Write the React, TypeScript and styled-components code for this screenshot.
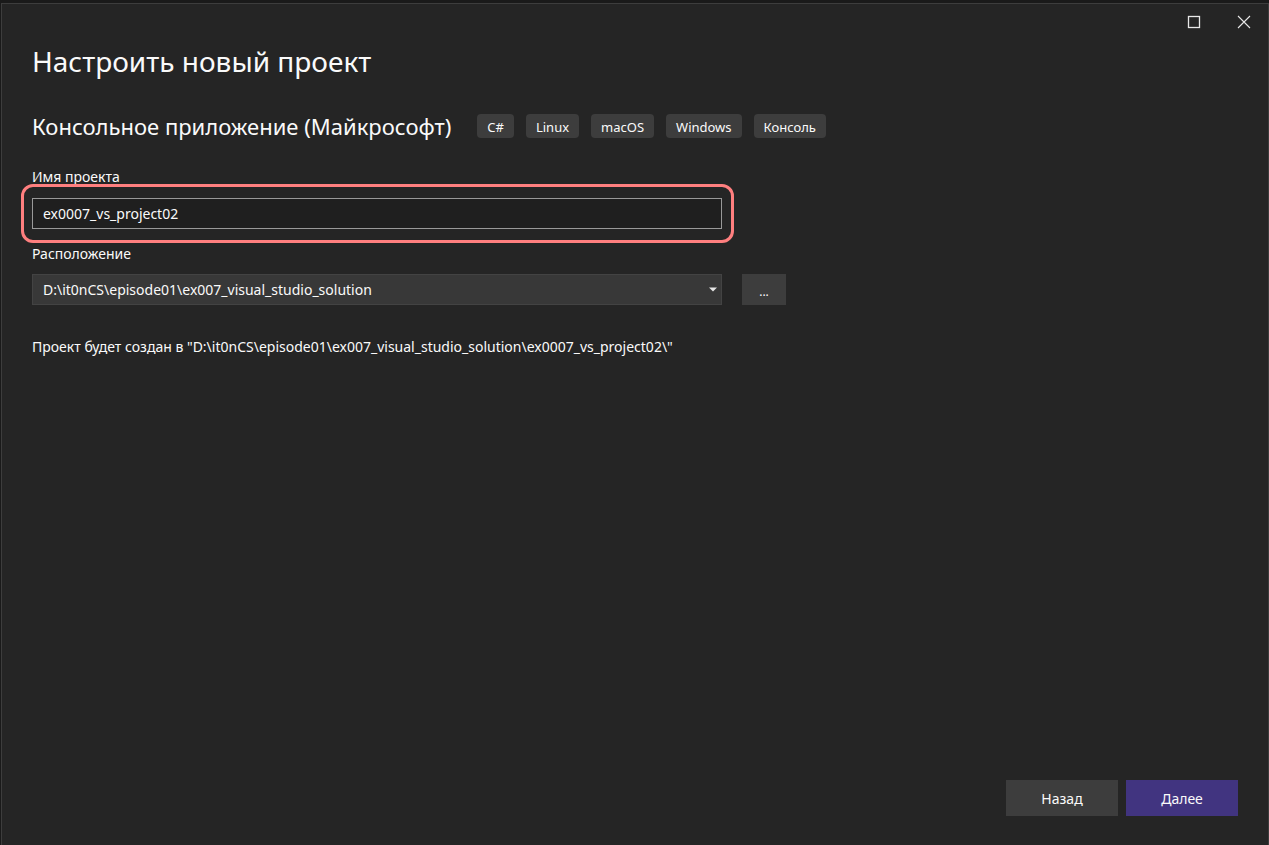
import React, { useState } from "react";
import styled, { createGlobalStyle } from "styled-components";

const GlobalStyle = createGlobalStyle`
  * { box-sizing: border-box; }
  body {
    margin: 0;
    background: #1a1a1a;
    color: #fafafa;
    font-family: "Noto Sans", "Open Sans", sans-serif;
    font-size: 14px;
    line-height: 20px;
  }
  button, input, select { font: inherit; color: inherit; margin: 0; border-radius: 0; }
`;

const Dialog = styled.main`
  display: flex;
  flex-direction: column;
  min-height: calc(100vh - 3px);
  margin: 3px 0 0 1px;
  background: #252525;
  border: 1px solid #3d3d3d;
  border-bottom: 0;
`;

const TitleBar = styled.header`
  display: flex;
  justify-content: flex-end;
  height: 36px;
`;

const CaptionButton = styled.button`
  display: flex;
  align-items: center;
  justify-content: center;
  width: 50px;
  height: 36px;
  padding: 0 0 0 2px;
  border: 0;
  background: transparent;
`;

const Content = styled.section`
  flex: 1;
  padding: 0 30px;
`;

const Title = styled.h1`
  margin: 0;
  font-size: 28px;
  line-height: 42px;
  font-weight: 400;
`;

const TemplateRow = styled.div`
  display: flex;
  flex-wrap: wrap;
  align-items: center;
  gap: 26px;
  margin-top: 26px;
`;

const TemplateName = styled.h2`
  margin: 0;
  font-size: 22px;
  line-height: 36px;
  font-weight: 400;
`;

const Tags = styled.ul`
  display: flex;
  gap: 12px;
  margin: 0;
  padding: 0;
  list-style: none;
`;

const Tag = styled.li`
  height: 24px;
  padding: 0 10px;
  border-radius: 4px;
  background: #3d3d3d;
  font-size: 13px;
  line-height: 26px;
`;

const Form = styled.form`
  margin-top: 23px;
`;

const Label = styled.label`
  display: block;
`;

const Field = styled.div<{ $gap: number }>`
  position: relative;
  width: 100%;
  max-width: 690px;
  margin-top: ${(p) => p.$gap}px;
`;

const Highlight = styled.span`
  position: absolute;
  inset: -14px -12px -14px -11px;
  border: 3px solid #ff7f7f;
  border-radius: 12px;
  pointer-events: none;
`;

const NameInput = styled.input`
  display: block;
  width: 100%;
  height: 31px;
  padding: 0 10px;
  border: 1px solid #999999;
  background: #1f1f1f;
  outline: 0;
`;

const LocationLabel = styled(Label)`
  margin-top: 15px;
`;

const LocationRow = styled.div`
  display: flex;
  align-items: flex-end;
  gap: 20px;
`;

const LocationSelect = styled.select`
  display: block;
  width: 100%;
  height: 31px;
  padding: 0 24px 0 10px;
  border: 1px solid #434343;
  background: #383838;
  appearance: none;
  outline: 0;
`;

const Arrow = styled.svg`
  position: absolute;
  top: 13px;
  right: 5px;
  pointer-events: none;
`;

const BrowseButton = styled.button`
  flex: none;
  width: 44px;
  height: 31px;
  padding: 4px 0 0;
  border: 0;
  background: #3d3d3d;
  font-size: 12px;
`;

const Summary = styled.p`
  margin: 32px 0 0;
`;

const Footer = styled.footer`
  display: flex;
  justify-content: flex-end;
  gap: 8px;
  padding: 0 30px 29px;
`;

const ActionButton = styled.button<{ $primary?: boolean }>`
  width: 112px;
  height: 36px;
  padding: 2px 0 0;
  border: 0;
  background: ${(p) => (p.$primary ? "#413480" : "#3d3d3d")};
`;

const tags = ["C#", "Linux", "macOS", "Windows", "Консоль"];
const locations = ["D:\\it0nCS\\episode01\\ex007_visual_studio_solution"];

export default function App() {
  const [name, setName] = useState("ex0007_vs_project02");
  const [location, setLocation] = useState(locations[0]);

  return (
    <>
      <GlobalStyle />
      <Dialog>
        <TitleBar>
          <CaptionButton type="button" aria-label="Развернуть">
            <svg width="14" height="14" viewBox="0 0 14 14" fill="none">
              <rect x="1.5" y="1.5" width="11" height="11" stroke="#e8e8e8" strokeWidth="1.3" />
            </svg>
          </CaptionButton>
          <CaptionButton type="button" aria-label="Закрыть">
            <svg width="14" height="14" viewBox="0 0 14 14" fill="none">
              <path d="M1 1L13 13M13 1L1 13" stroke="#e8e8e8" strokeWidth="1.1" />
            </svg>
          </CaptionButton>
        </TitleBar>
        <Content>
          <Title>Настроить новый проект</Title>
          <TemplateRow>
            <TemplateName>Консольное приложение (Майкрософт)</TemplateName>
            <Tags>
              {tags.map((tag) => (
                <Tag key={tag}>{tag}</Tag>
              ))}
            </Tags>
          </TemplateRow>
          <Form onSubmit={(e) => e.preventDefault()}>
            <Label htmlFor="project-name">Имя проекта</Label>
            <Field $gap={11}>
              <NameInput
                id="project-name"
                value={name}
                spellCheck={false}
                onChange={(e) => setName(e.target.value)}
              />
              <Highlight />
            </Field>
            <LocationLabel htmlFor="location">Расположение</LocationLabel>
            <LocationRow>
              <Field $gap={10}>
                <LocationSelect
                  id="location"
                  value={location}
                  onChange={(e) => setLocation(e.target.value)}
                >
                  {locations.map((path) => (
                    <option key={path}>{path}</option>
                  ))}
                </LocationSelect>
                <Arrow width="8" height="5" viewBox="0 0 8 5">
                  <path d="M0 .5H8L4 4.5Z" fill="#e6e6e6" />
                </Arrow>
              </Field>
              <BrowseButton type="button">...</BrowseButton>
            </LocationRow>
            <Summary>{`Проект будет создан в "${location}\\${name}\\"`}</Summary>
          </Form>
        </Content>
        <Footer>
          <ActionButton type="button">Назад</ActionButton>
          <ActionButton type="button" $primary>
            Далее
          </ActionButton>
        </Footer>
      </Dialog>
    </>
  );
}
